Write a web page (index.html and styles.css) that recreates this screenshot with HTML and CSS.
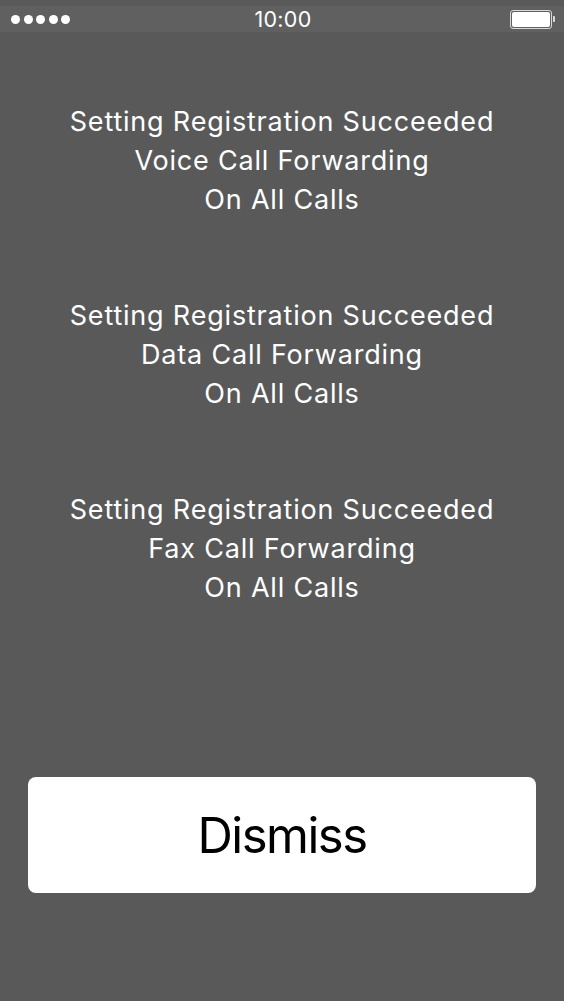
FILE: index.html
```html
<!DOCTYPE html>
<html lang="en">
<head>
<meta charset="utf-8">
<title>Call Forwarding</title>
<link rel="stylesheet" href="styles.css">
</head>
<body>
<div class="screen">
  <div class="status-bar">
    <div class="signal">
      <span class="dot"></span><span class="dot"></span><span class="dot"></span><span class="dot"></span><span class="dot"></span>
    </div>
    <div class="time">10:00</div>
    <div class="battery">
      <span class="battery-body"><span class="battery-fill"></span></span>
      <span class="battery-tip"></span>
    </div>
  </div>
  <div class="messages">
    <p class="message">Setting Registration Succeeded<br>Voice Call Forwarding<br>On All Calls</p>
    <p class="message">Setting Registration Succeeded<br>Data Call Forwarding<br>On All Calls</p>
    <p class="message">Setting Registration Succeeded<br>Fax Call Forwarding<br>On All Calls</p>
  </div>
  <div class="actions">
    <button class="dismiss" type="button">Dismiss</button>
  </div>
</div>
</body>
</html>
```
FILE: styles.css
```css
html, body {
  margin: 0;
  padding: 0;
  background: #595959;
}
.screen {
  display: flex;
  flex-direction: column;
  min-height: 1001px;
  font-family: Inter, "Liberation Sans", sans-serif;
  color: #ffffff;
}
.status-bar {
  margin-top: 6px;
  height: 26px;
  background: #606060;
  display: flex;
  align-items: center;
  justify-content: space-between;
  padding: 0 9px 0 11px;
}
.signal {
  display: flex;
  gap: 3.5px;
  width: 120px;
}
.dot {
  width: 9px;
  height: 9px;
  border-radius: 50%;
  background: #ffffff;
}
.time {
  font-size: 21.5px;
  line-height: 26px;
  letter-spacing: 0.3px;
}
.battery {
  width: 120px;
  display: flex;
  justify-content: flex-end;
  align-items: center;
}
.battery-body {
  width: 38px;
  height: 15px;
  border: 1px solid #d8d8d8;
  border-radius: 3px;
  padding: 1px;
  box-sizing: content-box;
  display: flex;
}
.battery-fill {
  flex: 1;
  background: #ffffff;
  border-radius: 2px;
}
.battery-tip {
  width: 2px;
  height: 6px;
  background: #d8d8d8;
  border-radius: 0 1px 1px 0;
  margin-left: 1px;
}
.messages {
  display: flex;
  flex-direction: column;
  gap: 77px;
  padding-top: 70px;
}
.message {
  margin: 0;
  text-align: center;
  font-size: 27px;
  line-height: 39px;
  letter-spacing: 0.8px;
}
.actions {
  margin-top: auto;
  padding: 0 28px 108px;
}
.dismiss {
  display: block;
  width: 100%;
  height: 116px;
  border: none;
  border-radius: 8px;
  background: #ffffff;
  color: #000000;
  font-family: Inter, "Liberation Sans", sans-serif;
  font-size: 49px;
  letter-spacing: -1.5px;
  padding: 0;
}
```
